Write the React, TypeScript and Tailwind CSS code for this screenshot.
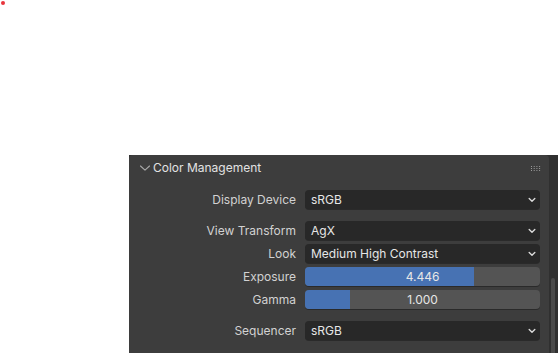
import React from "react";

const font = { fontFamily: "Inter, 'Noto Sans', sans-serif" };

function Chevron() {
  return (
    <svg width="8" height="6" viewBox="0 0 8 6" className="shrink-0">
      <path d="M1.2 1.6 L4 4.2 L6.8 1.6" fill="none" stroke="#dcdcdc" strokeWidth="1.4" strokeLinecap="round" strokeLinejoin="round" />
    </svg>
  );
}

function Dropdown({ value }: { value: string }) {
  return (
    <div className="flex h-[19px] w-[235px] items-center justify-between rounded-[4px] bg-[#282828] pl-[6px] pr-[4px] text-[12px] text-[#e6e6e6] shadow-[0_1px_0_#2a2a2a]">
      <span className="leading-none">{value}</span>
      <Chevron />
    </div>
  );
}

function Slider({ value, frac }: { value: string; frac: number }) {
  return (
    <div className="relative flex h-[19px] w-[235px] items-center justify-center overflow-hidden rounded-[4px] bg-[#545454] text-[12px] text-[#e6e6e6] shadow-[0_1px_0_#2a2a2a]">
      <div className="absolute left-0 top-0 h-full bg-[#4772b3]" style={{ width: `${frac * 100}%` }} />
      <span className="relative leading-none">{value}</span>
    </div>
  );
}

function Row({ label, children }: { label: string; children: React.ReactNode }) {
  return (
    <div className="flex h-[19px] items-center">
      <div className="w-[176px] pr-[9px] text-right text-[12px] leading-none text-[#d2d2d2]">{label}</div>
      {children}
    </div>
  );
}

export default function App() {
  return (
    <div className="relative h-[353px] w-[558px] bg-white" style={font}>
      <div className="absolute left-[1px] top-[1px] h-[4px] w-[4px] rounded-full bg-[#e8343c]" />
      <div className="absolute left-[129px] top-[155px] flex h-[198px] w-[429px] bg-[#303030]">
        <div className="flex h-full w-[420px] flex-col rounded-t-[4px] bg-[#3d3d3d]">
          <div className="flex h-[26px] items-center pl-[10px] pr-[8px]">
            <svg width="12" height="8" viewBox="0 0 12 8" className="mr-[2px]">
              <path d="M1.5 2 L6 6.2 L10.5 2" fill="none" stroke="#a8a8a8" strokeWidth="1.1" strokeLinecap="round" strokeLinejoin="round" />
            </svg>
            <span className="text-[12px] leading-none text-[#e2e2e2]">Color Management</span>
            <svg width="10" height="5" viewBox="0 0 10 5" className="ml-auto mr-[0px]">
              {[0, 1, 2, 3].map((c) =>
                [0, 1, 2].map((r) => (
                  <rect key={`${c}-${r}`} x={c * 2.7} y={r * 2} width="1" height="1" fill="#9a9a9a" />
                ))
              )}
            </svg>
          </div>
          <div className="flex flex-col pt-[9px]">
            <Row label="Display Device">
              <Dropdown value="sRGB" />
            </Row>
            <div className="mt-[12px] flex flex-col gap-[4px]">
              <Row label="View Transform">
                <Dropdown value="AgX" />
              </Row>
              <Row label="Look">
                <Dropdown value="Medium High Contrast" />
              </Row>
              <Row label="Exposure">
                <Slider value="4.446" frac={169 / 235} />
              </Row>
              <Row label="Gamma">
                <Slider value="1.000" frac={45 / 235} />
              </Row>
            </div>
            <div className="mt-[12px]">
              <Row label="Sequencer">
                <Dropdown value="sRGB" />
              </Row>
            </div>
          </div>
        </div>
        <div className="flex flex-1 flex-col pl-[2px] pt-[123px]">
          <div className="h-full w-[4px] rounded-t-[2px] bg-[#4a4a4a]" />
        </div>
      </div>
    </div>
  );
}
